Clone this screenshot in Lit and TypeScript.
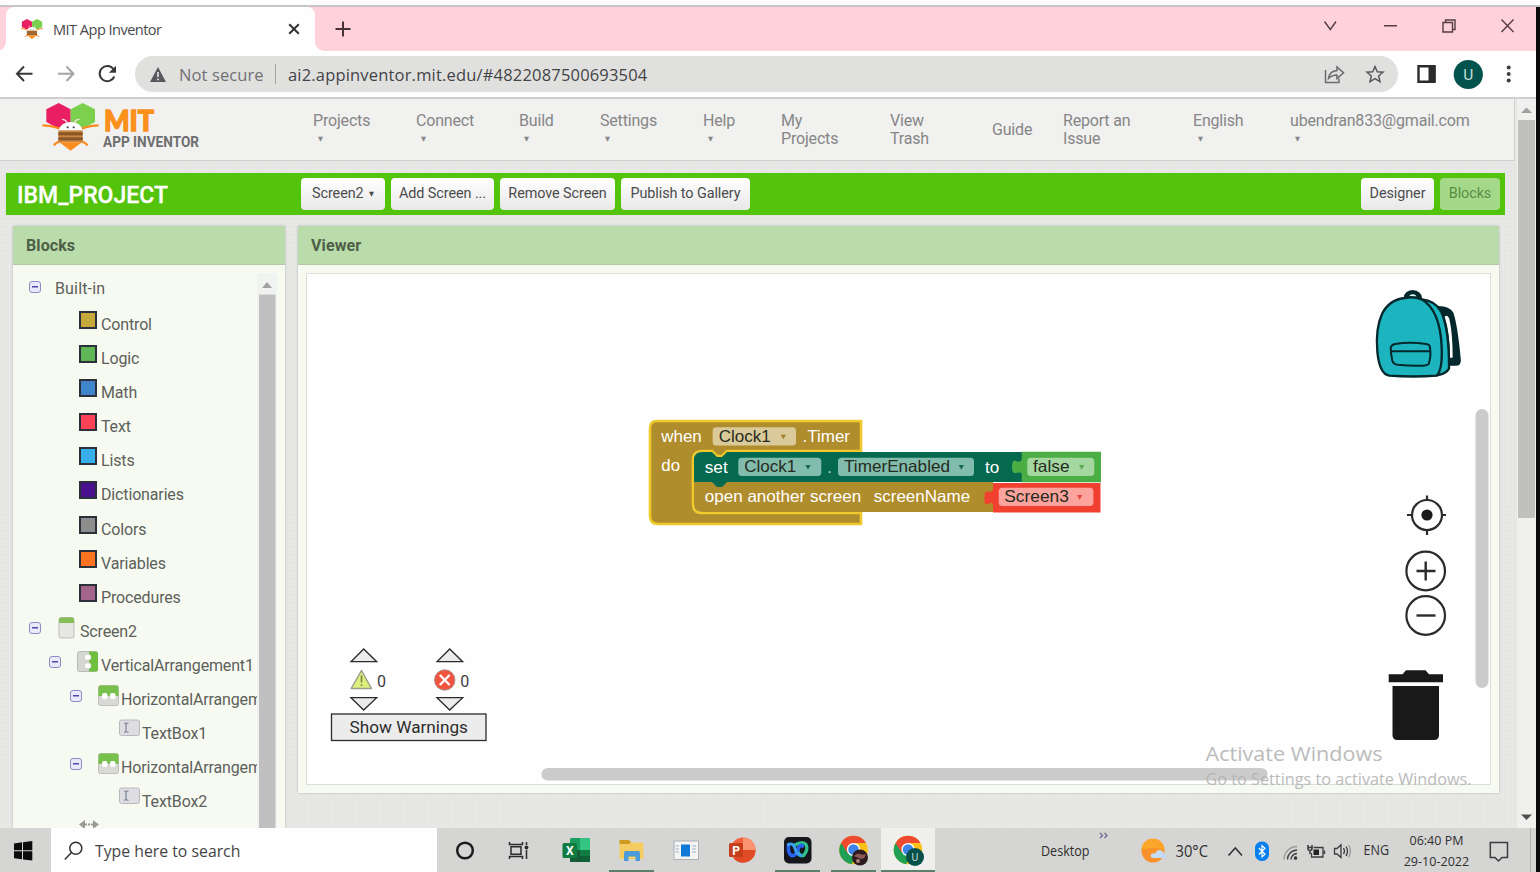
import { LitElement, html, css, svg, nothing } from "lit";
import { customElement } from "lit/decorators.js";
import { classMap } from "lit/directives/class-map.js";

const bee = svg`
  <path d="M212 328 L176 309 L139 328 V366 L176 386 L212 366Z" fill="#e91e63"/>
  <path d="M212 328 L248 309 L285 328 V366 L248 386 L212 366Z" fill="#7bd04e"/>
  <path d="M127 376 Q150 376 180 386 M296 376 Q274 376 244 386 M162 437 Q166 426 184 424 M262 437 Q258 426 240 424" stroke="#fb8c1e" stroke-width="7" fill="none"/>
  <path d="M176 392 Q182 366 212 366 Q242 366 248 392Z" fill="#fff"/>
  <path d="M186 358 Q198 358 202 370 M238 358 Q226 358 222 370" stroke="#f6dfe0" stroke-width="4" fill="none"/>
  <circle cx="203" cy="382" r="3.5" fill="#555"/><circle cx="221" cy="382" r="3.5" fill="#555"/>
  <rect x="175" y="391" width="73" height="36" fill="#c98842"/>
  <rect x="175" y="397" width="73" height="9" fill="#8a5426"/>
  <rect x="175" y="412" width="73" height="9" fill="#8a5426"/>
  <path d="M178 427 H246 L212 452Z" fill="#fb8c1e"/>`;

@customElement("browser-chrome")
class BrowserChrome extends LitElement {
  static styles = css`
    :host { display: block; font-family: "Open Sans", "Noto Sans", sans-serif; }
    svg { display: block; flex: none; }
    .edge { height: 5px; background: #fefefe; border-bottom: 2px solid #c6c5c5; }
    .strip { height: 44px; width: 1536px; background: #ffd2db; display: flex; padding-left: 6px; box-sizing: border-box; }
    .tab { position: relative; width: 309px; background: #fefefe; border-radius: 8px 8px 0 0; display: flex; align-items: center; padding-left: 15px; box-sizing: border-box; }
    .tab::before, .tab::after { content: ""; position: absolute; bottom: 0; width: 9px; height: 9px; }
    .tab::before { left: -9px; background: radial-gradient(circle at 0 0, transparent 8.5px, #fefefe 9px); }
    .tab::after { right: -9px; background: radial-gradient(circle at 100% 0, transparent 8.5px, #fefefe 9px); }
    .title { font-size: 14.600px; letter-spacing: -0.55px; color: #4a4a4c; width: 245px; padding-left: 10px; box-sizing: border-box; white-space: nowrap; }
    .plus { margin: 14px 0 0 20px; }
    .controls { margin-left: auto; }
    .bar { height: 46px; width: 1536px; background: #fefefe; display: flex; align-items: center; border-bottom: 2px solid #cfcfcf; box-sizing: content-box; }
    .omni { width: 1263px; height: 36px; border-radius: 18px; background: #e0e0df; display: flex; align-items: center; box-sizing: border-box; padding-left: 15px; font-size: 16.500px; white-space: nowrap; }
    .insecure { width: 96px; margin-left: 13px; color: #6f7072; letter-spacing: 0.1px; }
    .sep { width: 1px; height: 20px; background: #a5a5a5; margin-right: 12px; }
    .url { color: #434446; width: 1034px; letter-spacing: 0.18px; }
  `;
  render() {
    return html`
      <div class="edge"></div>
      <div class="strip">
        <div class="tab">
          <svg width="22" height="22" viewBox="133 305 158 150">${bee}</svg>
          <div class="title">MIT App Inventor</div>
          <svg width="12" height="12" viewBox="0 0 12 12"><path d="M1.2 1.2 10.8 10.8M10.8 1.2 1.2 10.8" stroke="#333" stroke-width="2"/></svg>
        </div>
        <svg class="plus" width="16" height="16" viewBox="0 0 16 16"><path d="M8 .5V15.5M.5 8H15.5" stroke="#4a3338" stroke-width="2"/></svg>
        <svg class="controls" width="220" height="44" viewBox="1316 7 220 44" fill="none" stroke="#543c42" stroke-width="1.4">
          <path d="M1324.5 21.5 1330.300 29.500 1336 21.500M1384 25.800H1397M1501.500 19.500 1513.500 32M1513.500 19.500 1501.500 32"/>
          <path d="M1443 22.500H1452.500V32H1443ZM1445.500 22V20H1455V29.500H1453"/>
        </svg>
      </div>
      <div class="bar">
        <svg width="135" height="46" viewBox="0 51 135 46" fill="none" stroke-width="2">
          <path d="M32.500 73.700H17.500M24 66.500 17 73.700 24 81" stroke="#37383a"/>
          <path d="M58 73.700H73M66.500 66.500 73.500 73.700 66.500 81" stroke="#a4a4a4"/>
          <path d="M113.500 69.300A7.600 7.600 0 1 0 114.300 76.500" stroke="#37383a"/>
          <path d="M116 65.800V72.800H108.800Z" fill="#37383a"/>
        </svg>
        <div class="omni">
          <svg width="16" height="15" viewBox="0 0 16 15"><path d="M8 0 16 15H0Z" fill="#58595c"/><path d="M8 5V10M8 11.500V13.300" stroke="#e0e0df" stroke-width="1.700"/></svg>
          <span class="insecure">Not secure</span><i class="sep"></i>
          <span class="url">ai2.appinventor.mit.edu/#4822087500693504</span>
          <svg width="66" height="30" viewBox="1322 59 66 30" fill="none" stroke="#6a6b6d" stroke-width="1.500">
            <path d="M1325.500 70V82.500H1339V78.500M1337 67V70.500Q1329.500 71 1328.500 78.500Q1332 75 1337 75V78.500L1343.500 72.700Z"/>
            <path d="M1375 66.500 1377.300 71.700 1383 72.200 1378.700 76 1380 81.600 1375 78.600 1370 81.600 1371.300 76 1367 72.200 1372.700 71.700Z" stroke="#58595b"/>
          </svg>
        </div>
        <svg width="138" height="46" viewBox="1398 51 138 46">
          <path d="M1418.500 66.200H1434.500V81.800H1418.500Z" fill="none" stroke="#2b2b2d" stroke-width="2.400"/><rect x="1428.500" y="66" width="7" height="16" fill="#2b2b2d"/>
          <circle cx="1468.300" cy="74.500" r="14.600" fill="#02534d"/>
          <text x="1468.300" y="80" text-anchor="middle" font-family="Roboto, sans-serif" font-size="15.500" fill="#c3dcd8">U</text>
          <g fill="#3c3d3f"><circle cx="1508.700" cy="67.500" r="2"/><circle cx="1508.700" cy="74" r="2"/><circle cx="1508.700" cy="80.500" r="2"/></g>
        </svg>
      </div>`;
  }
}

const menu: [string, string | null, number][] = [
  ["Projects", null, 103], ["Connect", null, 103], ["Build", null, 81], ["Settings", null, 103],
  ["Help", null, 78], ["My", "Projects", 109], ["View", "Trash", 102], ["Guide", "", 71],
  ["Report an", "Issue", 130], ["English", null, 97], ["ubendran833@gmail.com", null, 220],
];

@customElement("inventor-header")
class InventorHeader extends LitElement {
  static styles = css`
    :host { display: block; font-family: Roboto, sans-serif; }
    .top { height: 62px; width: 1515px; box-sizing: border-box; background: #f1f1f0; border-right: 1px solid #cfcfcf; border-bottom: 1px solid #cfcfcf; display: flex; }
    .logo { display: block; width: 313px; flex: none; }
    .item { flex: none; display: flex; flex-direction: column; justify-content: flex-start; padding-top: 13px; font-size: 16px; line-height: 18px; letter-spacing: -0.18px; color: #868686; white-space: nowrap; box-sizing: border-box; }
    .mid { padding-top: 22px; }
    .caret { font-size: 6.500px; padding-left: 5px; font-family: "DejaVu Sans", sans-serif; }
    .project { margin: 12px 0 0 6px; width: 1499px; height: 42px; background: #54c30c; display: flex; align-items: flex-start; padding: 5px 5px 0 11px; box-sizing: border-box; gap: 6px; }
    .name { width: 278px; font-size: 23px; line-height: 36px; font-weight: 500; color: #fff; -webkit-text-stroke: 0.3px #fff; }
    .btn { height: 32px; line-height: 31px; border-radius: 4px; background: linear-gradient(#fff, #e8e8e8); color: #4c4c4c; font-size: 14.400px; letter-spacing: -0.08px; text-align: center; white-space: nowrap; }
    .tri { font-size: 6.500px; font-family: "DejaVu Sans", sans-serif; vertical-align: 2px; margin-left: 2px; }
    .s { width: 84px; } .a { width: 103px; } .r { width: 115px; } .p { width: 129px; }
    .d { width: 73px; margin-left: auto; } .b { width: 60px; background: #a5d98a; color: #5b8d45; }
  `;
  render() {
    return html`
      <div class="top">
        <svg class="logo" width="313" height="61" viewBox="0 99 313 61">
          <g transform="scale(.33333)">${bee}</g>
          <text x="104" y="130.800" font-family="Lato, sans-serif" font-weight="900" font-size="27.500" fill="#fb901c" stroke="#fb901c" stroke-width="1.300" textLength="50" lengthAdjust="spacingAndGlyphs">MIT</text>
          <text x="103" y="146.500" font-weight="700" font-size="14.600" fill="#6e6e6e" textLength="96" lengthAdjust="spacingAndGlyphs">APP INVENTOR</text>
        </svg>
        ${menu.map(([a, b, w]) => html`<div class=${classMap({ item: true, mid: b === "" })} style="width:${w}px">
          <span>${a}</span>${b === null ? html`<span class="caret">▼</span>` : b ? html`<span>${b}</span>` : nothing}</div>`)}
      </div>
      <div class="project">
        <div class="name">IBM_PROJECT</div>
        <div class="btn s">Screen2 <span class="tri">▼</span></div>
        <div class="btn a">Add Screen ...</div>
        <div class="btn r">Remove Screen</div>
        <div class="btn p">Publish to Gallery</div>
        <div class="btn d">Designer</div>
        <div class="btn b">Blocks</div>
      </div>`;
  }
}

const drawers: [string, string][] = [
  ["Control", "#c8a93d"], ["Logic", "#60b557"], ["Math", "#3f85cb"], ["Text", "#ff4257"], ["Lists", "#35b0ec"],
  ["Dictionaries", "#4b118f"], ["Colors", "#8d8d8d"], ["Variables", "#fd7420"], ["Procedures", "#a5648b"],
];

const compIcons: Record<string, unknown> = {
  screen: svg`<rect x="1" y=".5" width="15" height="20.500" rx="2" fill="#e6e6e3" stroke="#bdbdba"/><path d="M1 6V2.500Q1 .5 3 .5H14Q16 .5 16 2.500V6Z" fill="#84bf55"/>`,
  vertical: svg`<rect x=".5" y=".5" width="20" height="20" rx="2" fill="#d6d8d2" stroke="#b9bbb6"/><path d="M12 .5H18.500Q21 .5 21 3V18Q21 20.500 18.500 20.500H12Z" fill="#6fbf3f"/><rect x="7.500" y="3.500" width="6.500" height="5.500" rx="2" fill="#fff" stroke="#c3c8bd" stroke-width=".6"/><rect x="7.500" y="12" width="6.500" height="5.500" rx="2" fill="#fff" stroke="#c3c8bd" stroke-width=".6"/>`,
  horizontal: svg`<rect x=".5" y=".5" width="20" height="20" rx="2" fill="#d9dad6" stroke="#bfc0bc"/><path d="M.5 11V3Q.5 .5 3 .5H18Q20.500 .5 20.500 3V11Z" fill="#78c04c"/><rect x="4" y="8" width="5.500" height="6" rx="2" fill="#fff"/><rect x="12" y="8" width="5.500" height="6" rx="2" fill="#fff"/>`,
  textbox: svg`<rect x=".5" y="1" width="20" height="15.500" rx="2" fill="#dedee2" stroke="#b9b9bd"/><path d="M5 4Q7 4 7 5.500V12Q7 13 5 13.300M9.500 4Q7 4 7 5.500M7 12Q7 13 9.500 13.300" stroke="#7d8499" fill="none" stroke-width="1.200"/>`,
};

const comps: { name: string; icon: string; toggle: boolean; pad: number; gap: number; top: number; label: number }[] = [
  { name: "Screen2", icon: "screen", toggle: true, pad: 16, gap: 17, top: 2, label: 22 },
  { name: "VerticalArrangement1", icon: "vertical", toggle: true, pad: 36, gap: 16, top: 2, label: 24 },
  { name: "HorizontalArrangement1", icon: "horizontal", toggle: true, pad: 57, gap: 16, top: 2, label: 23 },
  { name: "TextBox1", icon: "textbox", toggle: false, pad: 106, gap: 0, top: 2, label: 23 },
  { name: "HorizontalArrangement2", icon: "horizontal", toggle: true, pad: 57, gap: 16, top: 2, label: 23 },
  { name: "TextBox2", icon: "textbox", toggle: false, pad: 106, gap: 0, top: 2, label: 23 },
];

@customElement("blocks-panel")
class BlocksPanel extends LitElement {
  static styles = css`
    :host { display: flex; flex-direction: column; width: 272px; height: 602px; background: #f6faf1; font-family: Roboto, sans-serif; box-shadow: 0 0 2px #aaa; overflow: hidden; }
    .head { flex: none; height: 39px; line-height: 40px; padding-left: 13px; background: #b9dcaa; border-bottom: 1px solid #b4c8a9; font-weight: 700; font-size: 16px; color: #4e5f48; box-sizing: border-box; letter-spacing: 0.1px; }
    .body { display: flex; min-height: 0; padding-top: 7px; }
    .tree { width: 244px; flex: none; overflow: hidden; height: 560px; font-size: 16px; color: #5d5f5b; white-space: nowrap; }
    .row { display: flex; align-items: flex-start; height: 34.100px; }
    .gap { flex: none; }
    .root { height: 36px; padding: 0 0 0 16px; gap: 14px; box-sizing: border-box; }
    .root .minus { margin-top: 9px; }
    .root .label { line-height: 34px; letter-spacing: 0.15px; }
    .drawer { padding-left: 66px; gap: 4px; }
    .swatch { flex: none; width: 18px; height: 18px; box-sizing: border-box; border: 2px solid #2c3038; margin-top: 3px; }
    .label { line-height: 34px; letter-spacing: -0.15px; }
    .minus { flex: none; width: 12px; height: 12px; box-sizing: border-box; border: 1.500px solid #8c8bc6; border-radius: 3px; background: #e9e9fb linear-gradient(#4b4ba6, #4b4ba6) center / 6px 1.500px no-repeat; margin-top: 7px; }
    svg { display: block; flex: none; }
  `;
  render() {
    return html`
      <div class="head">Blocks</div>
      <div class="body">
        <div class="tree">
          <div class="row root"><i class="minus"></i><span class="label">Built-in</span></div>
          ${drawers.map(([n, c]) => html`<div class="row drawer"><i class="swatch" style="background:${c}"></i><span class="label">${n}</span></div>`)}
          ${comps.map(c => html`<div class="row" style="padding-left:${c.pad}px">
            ${c.toggle ? html`<i class="minus"></i><span class="gap" style="width:${c.gap}px"></span>` : nothing}
            <svg width=${c.label} height="24" viewBox="0 ${-c.top} ${c.label} 24">${compIcons[c.icon]}</svg>
            <span class="label">${c.name}</span></div>`)}
          <div class="row drawer"><svg width="20" height="16" viewBox="0 -1 20 16"><path d="M0 4.500 6 0V3.500H8V5.500H6V9ZM20 4.500 14 0V3.500H12V5.500H14V9ZM9 3.500H11V5.500H9Z" fill="#9a9b98"/></svg></div>
        </div>
        <svg width="20" height="556" viewBox="257 272 20 556">
          <rect x="257" y="273" width="20" height="555" fill="#f1f3f0"/>
          <path d="M262 288 267 282 272 288Z" fill="#a2a2a2"/><rect x="259" y="294.500" width="16.500" height="534" fill="#c0c0c0"/>
        </svg>
      </div>`;
  }
}

const word = (t: string, x: number, y: number, w: number, fill = "#fff") =>
  svg`<text x=${x} y=${y} textLength=${w} lengthAdjust="spacingAndGlyphs" font-size="16.500" fill=${fill}>${t}</text>`;
const field = (x: number, y: number, w: number, bg: string, t: string, tx: number, tw: number, ax: number, arrow: string) => svg`
  <rect x=${x} y=${y} width=${w} height="18.300" rx="3.500" fill=${bg}/>
  ${word(t, tx, y + 14.6, tw, "#262a20")}
  <path d="M${ax - 2.7} ${y + 7.4}h5.400l-2.700 4.600z" fill=${arrow}/>`;

@customElement("workspace-viewer")
class WorkspaceViewer extends LitElement {
  static styles = css`
    :host { display: block; width: 1201px; height: 567px; background: #f6faf1; font-family: Roboto, sans-serif; box-shadow: 0 0 2px #aaa; }
    .head { height: 39px; line-height: 40px; padding-left: 13px; background: #b9dcaa; border-bottom: 1px solid #b4c8a9; font-weight: 700; font-size: 16px; color: #4e5f48; box-sizing: border-box; letter-spacing: 0.1px; }
    .canvas { margin: 8px 0 0 8px; width: 1185px; height: 512px; box-sizing: border-box; border: 1px solid #dcdfd8; background: #fefefe; }
    svg { display: block; overflow: visible; }
    .block { font-family: "Liberation Sans", Arial, sans-serif; }
  `;
  render() {
    return html`
      <div class="head">Viewer</div>
      <div class="canvas">
        <svg width="1183" height="510" viewBox="307 274 1183 510">
          <g class="block">
            <path d="M657 421H861V451H727L722 456H717L712 451H702Q693 451 693 460V504Q693 513 702 513H861V524H658Q650 524 650 516V428Q650 421 657 421Z" fill="#b08d2c" stroke="#f0ca2c" stroke-width="2.600"/>
            <path d="M700 482H993V512H703Q694 512 694 504V482Z" fill="#b08d2c"/>
            <path d="M694 460Q694 452 702 452H712L717 457H722L727 452H1023V482H727L722 487H717L712 482H694Z" fill="#04694f"/>
            <path d="M1021.700 451.800H1101V482.300H1021.700V473Q1020 472 1016 473Q1012 474 1012 467Q1012 459 1016 461Q1020 463 1021.700 460Z" fill="#4bae45"/>
            <path d="M993 483H1100.500V512.500H993V504Q991 502 988 504Q984 506 984.500 498Q984.500 490 988 491.500Q991 493 993 490Z" fill="#f1402f"/>
            ${word("when", 661.3, 442, 40.5)}
            ${field(712.7, 427.3, 83.3, "#dac999", "Clock1", 718.7, 52, 783.3, "#a08131")}
            ${word(".Timer", 802.5, 442, 47.5)}
            ${word("do", 661.3, 470.5, 18.7)}
            ${word("set", 704.7, 472.5, 23)}
            ${field(738.3, 457.7, 83, "#82bcac", "Clock1", 744.3, 52, 808, "#176a55")}
            ${word(".", 827, 472.5, 5, "#a9cfc5")}
            ${field(838, 457.7, 136, "#82bcac", "TimerEnabled", 844, 106, 961.3, "#176a55")}
            ${word("to", 985, 472.5, 14.2)}
            ${field(1027.3, 457.7, 67, "#a5d8a0", "false", 1033, 36.5, 1081.7, "#5ba754")}
            ${word("open another screen", 704.7, 502, 156.5)}
            ${word("screenName", 873.7, 502, 96.5)}
            ${field(998.7, 487.7, 94.7, "#fba39c", "Screen3", 1004.3, 64.5, 1079.7, "#e2483c")}
          </g>
          <g transform="translate(1340 270) scale(.33333)" stroke="#04282c" stroke-width="7" stroke-linejoin="round" fill="#1cb5bf">
            <path d="M284 112Q325 108 337 130Q350 170 359 270Q360 284 348 284H330L318 240Z" fill="#04282c"/>
            <path d="M314 140Q322 132 328 146Q338 190 338 262Q334 266 330 262Q330 190 314 140Z" fill="#fefefe" stroke="none"/>
            <path d="M194 84Q196 64 218 63Q240 64 243 84Z" fill="#04282c" stroke-width="6"/>
            <path d="M207 80Q209 73 218 73Q227 73 230 80Z" fill="#dff" stroke="none"/>
            <path d="M245 88Q285 92 303 124Q328 180 327 296Q318 312 290 316Z"/>
            <path d="M196 84Q148 88 126 132Q106 176 112 244Q118 312 148 317Q220 322 290 317Q308 300 305 230Q300 120 245 88Q220 78 196 84Z"/>
            <path d="M152 232Q155 224 165 222Q210 214 258 222Q270 224 270 232Q274 260 266 282Q262 286 250 287Q210 288 172 284Q160 282 157 272Q152 250 152 232ZM153 244H271" fill="none" stroke-width="6"/>
          </g>
          <rect x="1475.500" y="409" width="13" height="279" rx="6.500" fill="#cbcbcb"/>
          <rect x="541.500" y="768" width="726" height="12.500" rx="6.200" fill="#cbcbcb"/>
          <g fill="none" stroke="#2b2b2b" stroke-width="2.200">
            <circle cx="1427" cy="515" r="15"/><circle cx="1427" cy="515" r="5.600" fill="#1a1a1a" stroke="none"/>
            <path d="M1427 495.500V501M1427 529V535M1407 515H1412.500M1441 515H1446"/>
            <circle cx="1425.700" cy="571" r="19.300"/><path d="M1416.500 571H1435.500M1425.700 561.500V580.500" stroke-width="2.400"/>
            <circle cx="1425.700" cy="615.500" r="19.300"/><path d="M1416.500 615.500H1435.500" stroke-width="2.400"/>
          </g>
          <path d="M1388.700 674.300H1402.500L1406 670.300H1425.500L1429 674.300H1443V682.300H1388.700ZM1392.500 686H1439V735Q1439 740 1434 740H1397.500Q1392.500 740 1392.500 735Z" fill="#191919"/>
          <g fill="#ececec" stroke="#2c2c2c" stroke-width="1.300">
            <path d="M351 661.700 363.700 649 376.700 661.700ZM437 661.700 449.700 649 462.700 661.700ZM351 697.700 363.700 710 376.700 697.700ZM437 697.700 449.700 710 462.700 697.700Z"/>
            <rect x="331.500" y="714" width="154.500" height="26.500"/>
          </g>
          <path d="M361.500 670.500 371.500 688.500H351.200Z" fill="#dcee7c" stroke="#9aa08a" stroke-width="1.500" stroke-linejoin="round"/>
          <path d="M361.500 675.500V682.500M361.500 684.200V686" stroke="#7b8547" stroke-width="1.600"/>
          <circle cx="444.700" cy="680" r="10.200" fill="#f1543f" stroke="#a98a84" stroke-width="1"/>
          <path d="M439.800 675 449.600 685M449.600 675 439.800 685" stroke="#fff" stroke-width="2.300"/>
          <g font-size="16" fill="#3d3d3d">
            <text x="377" y="686.500">0</text><text x="460.300" y="686.500">0</text>
            <text x="349.500" y="733" font-size="16.500" fill="#2c2c2c" textLength="118.500" lengthAdjust="spacingAndGlyphs">Show Warnings</text>
          </g>
          <g font-family="Open Sans, Noto Sans, sans-serif" fill="#b4b4b4" opacity=".9">
            <text x="1205.500" y="761" font-size="20.500" textLength="177" lengthAdjust="spacingAndGlyphs">Activate Windows</text>
            <text x="1205.500" y="784.500" font-size="15.500" textLength="266" lengthAdjust="spacingAndGlyphs">Go to Settings to activate Windows.</text>
          </g>
        </svg>
      </div>`;
  }
}

const chrome = svg`
  <circle cx="27" cy="22" r="14.300" fill="#fbc116"/>
  <path d="M27 22 14.600 14.900A14.300 14.300 0 0 0 25 36.200L32 25Z" fill="#1fa055"/>
  <path d="M14.600 14.900A14.300 14.300 0 0 1 39.400 14.900H27L21 25Z" fill="#ee4a30"/>
  <circle cx="27" cy="21.500" r="6.600" fill="#fff"/><circle cx="27" cy="21.500" r="5.300" fill="#3f84ea"/>`;

const apps: { w: number; run?: boolean; on?: boolean; art: unknown }[] = [
  { w: 55, art: svg`<circle cx="28" cy="22.500" r="7.800" fill="none" stroke="#1c1c1c" stroke-width="2.500"/>` },
  { w: 55, art: svg`<path d="M17.500 14V16.500H30.500V14M17.500 31V28.500H30.500V31M19 18.700H29V26.300H19ZM34.500 14V17M34.500 22V31" fill="none" stroke="#2b2b2b" stroke-width="1.500"/><circle cx="34.500" cy="19.500" r="1.900" fill="#2b2b2b"/>` },
  { w: 59, art: svg`<rect x="23" y="10" width="20" height="24" rx="1.500" fill="#1c9d60"/><rect x="33" y="10" width="10" height="12" fill="#33c481"/><rect x="33" y="22" width="10" height="6" fill="#107c41"/><rect x="23" y="22" width="10" height="12" fill="#185c37"/><rect x="33" y="28" width="10" height="6" fill="#0f6238"/><rect x="15.500" y="15" width="14.500" height="15" rx="1.500" fill="#107c41"/><text x="22.700" y="27" text-anchor="middle" font-size="12" font-weight="700" fill="#fff">X</text>` },
  { w: 51, run: true, art: svg`<path d="M13.500 14Q13.500 12 15.500 12H23L25.500 14.500H36Q37.500 14.500 37.500 16V31H13.500Z" fill="#f3cd62"/><path d="M13.500 12H23L25 14.500L23 16H13.500Z" fill="#cf9a22"/><path d="M18 33V25Q18 23 20 23H32Q34 23 34 25V33H29.500V28.500H22.500V33Z" fill="#4b9bdb"/>` },
  { w: 57, art: svg`<rect x="17" y="13" width="24.500" height="18.500" fill="#f4f4f2" stroke="#a9b0b8"/><rect x="24" y="16.500" width="9" height="12" fill="#1079d8"/><path d="M18.500 18H22M18.500 21H22M18.500 24H22M35 18H39M35 21H39M35 24H39" stroke="#9eb2c4"/>` },
  { w: 56, art: svg`<circle cx="29" cy="22" r="12.500" fill="#f0623c"/><path d="M29 22V9.500A12.500 12.500 0 0 1 41.500 22Z" fill="#fd9470"/><path d="M29 22H41.500A12.500 12.500 0 0 1 20 30.800Z" fill="#e04a24"/><rect x="15" y="15" width="14" height="14" rx="1.500" fill="#c43e1c"/><text x="22" y="26.500" text-anchor="middle" font-size="12" font-weight="700" fill="#fff">P</text>` },
  { w: 55, run: true, art: svg`<rect x="14" y="9" width="27.500" height="26.500" rx="5" fill="#15171c"/><path d="M25 17Q33 12.500 36 16.500Q38.500 22 33.500 27.500Q29 29 27.500 22" fill="none" stroke="#2fc08f" stroke-width="3.400" stroke-linecap="round"/><path d="M18.500 16.500Q17.500 26 22 27.800Q26.500 28 28.500 20Q30 16 32.500 18" fill="none" stroke="#2a62f0" stroke-width="3.600" stroke-linecap="round"/><path d="M18.500 16.500Q22.500 14.500 24.500 19Q26.500 27 31 27.500" fill="none" stroke="#3aa0f5" stroke-width="3" stroke-linecap="round"/>` },
  { w: 56, run: true, art: svg`<g transform="translate(1.500 0)">${chrome}</g><circle cx="35" cy="29.500" r="8" fill="#2c1c20"/><path d="M29 28Q33 24 37 27L41 26Q40 31 36 31Z" fill="#8d5a54"/><circle cx="33" cy="33" r="2" fill="#b08078"/>` },
  { w: 54, run: true, on: true, art: svg`${chrome}<circle cx="34" cy="29" r="9" fill="#07504a"/><text x="34" y="33" text-anchor="middle" font-size="10.500" fill="#bcd8d2">U</text>` },
];

@customElement("task-bar")
class TaskBar extends LitElement {
  static styles = css`
    :host { display: flex; height: 44px; width: 1536px; background: #d5d5d4; font-family: "Open Sans", "Noto Sans", sans-serif; color: #333; }
    svg { display: block; flex: none; }
    .search { width: 386px; background: #fefefe; display: flex; align-items: center; font-size: 15.800px; color: #444; gap: 12px; padding: 2px 0 0 13px; box-sizing: border-box; white-space: nowrap; }
    .app { height: 44px; box-sizing: border-box; font-family: Roboto, sans-serif; }
    .app.run { background: linear-gradient(#5a806c, #5a806c) center bottom / 45px 2px no-repeat; }
    .app.on { background: linear-gradient(#5a806c, #5a806c) center bottom / 54px 2px no-repeat #efefee; }
    .tray { margin-left: auto; }
  `;
  render() {
    const t = (s: string, x: number, y: number, w: number, z = 13.4) =>
      svg`<text x=${x} y=${y} textLength=${w} lengthAdjust="spacingAndGlyphs" font-size=${z}>${s}</text>`;
    return html`
      <svg width="51" height="44" viewBox="0 0 51 44"><path d="M14 15.500 22 14.300V22.300H14ZM23 14.200 32.300 13V22.300H23ZM14 23.300H22V31.300L14 30.200ZM23 23.300H32.300V32.600L23 31.400Z" fill="#0c0c0c"/></svg>
      <div class="search">
        <svg width="19" height="20" viewBox="0 0 19 20" fill="none" stroke="#333" stroke-width="1.500"><circle cx="11.800" cy="7.200" r="6"/><path d="M7.500 11.500 .8 18.500"/></svg>
        <span>Type here to search</span>
      </div>
      ${apps.map(a => html`<div class=${classMap({ app: true, run: !!a.run, on: !!a.on })} style="width:${a.w}px"><svg width=${a.w} height="44" viewBox="0 0 ${a.w} 44">${a.art}</svg></div>`)}
      <svg class="tray" width="536" height="44" viewBox="1000 828 536 44">
        <g fill="#2f2f2f">
          ${t("Desktop", 1041, 855.5, 48.5, 14)}${t("30°C", 1175.5, 857, 32.5, 15.5)}${t("ENG", 1363.5, 855.3, 25.5, 14)}
          ${t("06:40 PM", 1409.5, 845, 54)}${t("29-10-2022", 1403.7, 865.5, 65.5)}
        </g>
        <path d="M1100 833 1102.500 835.500 1100 838M1104.500 833 1107 835.500 1104.500 838" fill="none" stroke="#6c6890" stroke-width="1.300"/>
        <circle cx="1153" cy="851" r="11.500" fill="#f9922a"/><path d="M1141.500 850A11.500 11.500 0 0 1 1164.500 850Q1153 846 1141.500 850Z" fill="#fba62b"/>
        <path d="M1154 858Q1149.500 858 1151 854.500Q1153 852.500 1155.500 853.500Q1157 848.500 1161.500 850.500Q1164 852 1163.500 853.500Q1167.500 854 1166.500 857Q1166 858 1164 858Z" fill="#c5dbf5"/>
        <path d="M1228.500 855.500 1235.300 848 1242 855.500" fill="none" stroke="#333" stroke-width="1.600"/>
        <rect x="1255" y="841.500" width="14" height="19.500" rx="6.500" fill="#0a80f0"/>
        <path d="M1258.800 848 1265 854.300 1262 857V845.500L1265 848.200 1258.800 854.500" fill="none" stroke="#fff" stroke-width="1.200"/>
        <g fill="none" stroke="#3c3c3c" stroke-width="1.300">
          <path d="M1284 859.500A13 13 0 0 1 1297 846.500" stroke="#999"/><path d="M1287.500 859.500A9.500 9.500 0 0 1 1297 850M1291 859.500A6 6 0 0 1 1297 853.500"/><circle cx="1295.500" cy="858" r="1.200" fill="#333"/>
          <path d="M1313.500 847.500H1323V857H1311.500V853M1324.500 850.500V854"/><rect x="1313.500" y="849.500" width="5.500" height="5.500" fill="#222" stroke="none"/>
          <path d="M1308 845V848.500Q1308 850.500 1310 850.500Q1312 850.500 1312 848.500V845M1308 847.500H1312M1310 850.500V854" stroke-width="1.600"/>
          <path d="M1334.500 848.500H1337L1341 844.800V857.500L1337 854H1334.500ZM1343.500 848Q1345.500 851 1343.500 854M1346 846.500Q1349 851 1346 856"/><path d="M1348.500 845Q1352.500 851 1348.500 857.500" stroke="#999"/>
          <path d="M1490.300 842.500H1507.500V857.500H1502L1498.500 861 1495 857.500H1490.300Z" stroke-width="1.500"/>
        </g>
        <path d="M1530.500 828V872" stroke="#b3b3b3"/>
      </svg>`;
  }
}

@customElement("app-root")
class AppRoot extends LitElement {
  static styles = css`
    :host { display: block; width: 1540px; height: 872px; overflow: hidden; background: #0b0b0b; }
    .page { width: 1536px; height: 729px; display: flex; }
    .content { width: 1517px; height: 729px; overflow: hidden;
      background: repeating-linear-gradient(90deg, rgba(255,255,255,.14) 0 1px, transparent 1px 3px), repeating-linear-gradient(rgba(0,0,0,.01) 0 1px, transparent 1px 4px), #e6e6e5; }
    .panels { display: flex; align-items: flex-start; gap: 13px; padding: 11px 0 0 13px; }
    .bar { display: block; flex: none; }
  `;
  render() {
    return html`
      <browser-chrome></browser-chrome>
      <div class="page">
        <div class="content">
          <inventor-header></inventor-header>
          <div class="panels"><blocks-panel></blocks-panel><workspace-viewer></workspace-viewer></div>
        </div>
        <svg class="bar" width="19" height="729" viewBox="1517 99 19 729">
          <rect x="1517" y="99" width="19" height="729" fill="#f0f0ef"/>
          <path d="M1521 113 1526.500 107.500 1532 113Z" fill="#a0a0a0"/><path d="M1521 814.500H1532L1526.500 820Z" fill="#505050"/>
          <rect x="1518" y="120" width="17" height="398" fill="#c0c0bf"/>
        </svg>
      </div>
      <task-bar></task-bar>`;
  }
}
